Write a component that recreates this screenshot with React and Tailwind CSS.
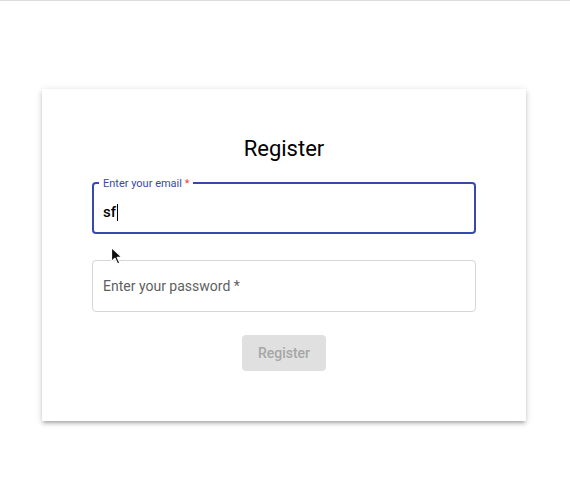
import React from 'react'

// Mouse pointer caught in the screenshot
function Pointer() {
  return (
    <svg
      className="absolute left-[110px] top-[246px] pointer-events-none"
      width="14"
      height="20"
      viewBox="0 0 14 20"
    >
      <path
        d="M1.5 1.5 L1.5 15.5 L5 12.3 L7.6 18 L9.8 17 L7.3 11.4 L12 11.4 Z"
        fill="#111"
        stroke="#fff"
        strokeWidth="1.2"
        strokeLinejoin="round"
      />
    </svg>
  )
}

export default function App() {
  return (
    <div className="relative w-[570px] h-[486px] bg-white font-['Roboto','Liberation_Sans',sans-serif] overflow-hidden">
      {/* thin top rule */}
      <div className="h-px bg-[#dcdcdc]" />

      <div className="flex pl-[42px] pt-[88px]">
        <div className="w-[484px] h-[332px] bg-white shadow-[0_3px_3px_-2px_rgba(0,0,0,0.2),0_3px_4px_0_rgba(0,0,0,0.14),0_1px_8px_0_rgba(0,0,0,0.12)] px-[50px] flex flex-col items-center">
          <h1 className="mt-[45px] text-[22px] leading-[30px] text-black">Register</h1>

          {/* Email — focused outlined field */}
          <div className="relative mt-[18px] w-[384px] h-[52px] rounded-[4px] border-2 border-[#3949ab]">
            <span className="absolute left-[5px] -top-[7px] bg-white px-[4px] text-[11px] leading-[14px] text-[#3949ab]">
              Enter your email <span className="text-[#f44336]">*</span>
            </span>
            <div className="pl-[9px] pt-[19px] text-[15px] leading-[18px] font-medium text-black flex items-center">
              sf<span className="inline-block w-px h-[17px] bg-black ml-px" />
            </div>
          </div>

          {/* Password — idle outlined field */}
          <div className="mt-[26px] w-[384px] h-[52px] rounded-[4px] border border-[#d6d6d6] flex items-center pl-[10px]">
            <span className="text-[14px] text-[#5f5f5f]">Enter your password *</span>
          </div>

          <button
            disabled
            className="mt-[23px] w-[84px] h-[36px] rounded-[4px] bg-[#e0e0e0] text-[14px] font-medium text-[#a6a6a6]"
          >
            Register
          </button>
        </div>
      </div>

      <Pointer />
    </div>
  )
}
